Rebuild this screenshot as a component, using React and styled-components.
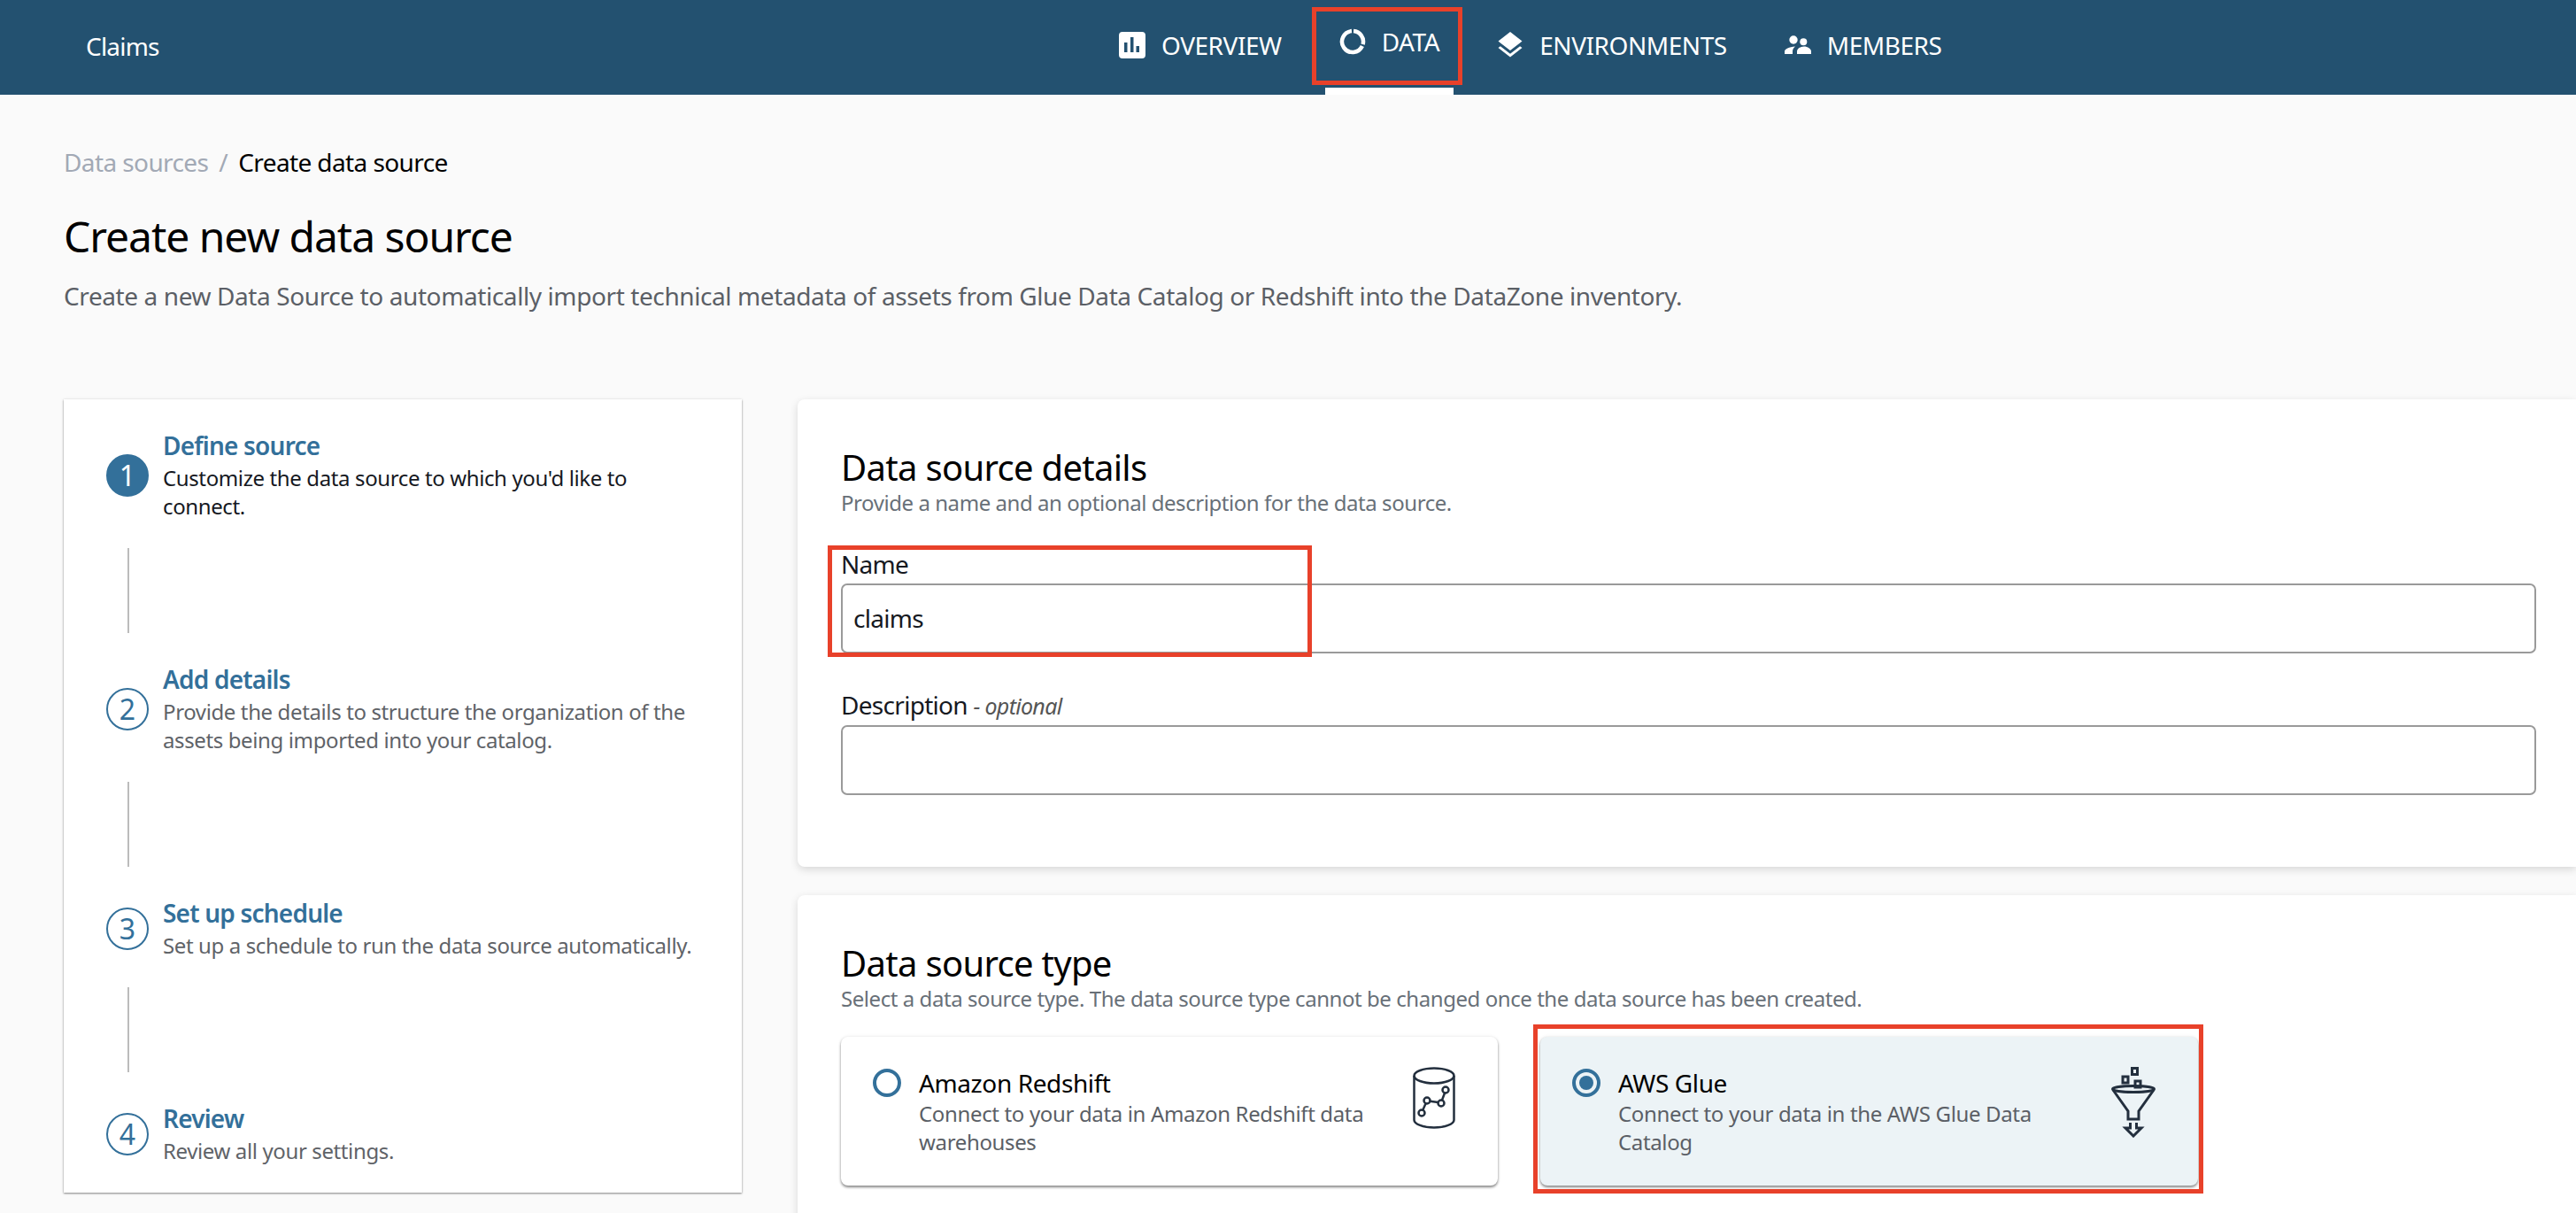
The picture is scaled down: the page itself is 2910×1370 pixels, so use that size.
import styled, { createGlobalStyle } from "styled-components";
import { MdLayers } from "react-icons/md";

const GlobalStyle = createGlobalStyle`
  html, body {
    margin: 0;
    height: 100%;
    overflow: hidden;
    background: #fafafa;
    font-family: "Noto Sans", "Open Sans", sans-serif;
    color: #16191f;
  }
  * { box-sizing: border-box; }
`;

const Page = styled.div`
  height: 1370px;
  overflow: hidden;
`;

const Header = styled.header`
  height: 107px;
  background: #235170;
  display: flex;
  color: #fff;
`;

const ProjectName = styled.div`
  width: 1248px;
  padding: 35px 0 0 97px;
  font-size: 28px;
  line-height: 34px;
  letter-spacing: -0.8px;
`;

const Nav = styled.nav`
  display: flex;
  gap: 33px;
`;

const Tab = styled.div`
  position: relative;
  height: 107px;
  padding: ${(p) => (p.$active ? "0 16px 5px" : "3px 16px 0")};
  display: flex;
  align-items: center;
  gap: 18px;
  font-size: 28px;
  letter-spacing: -0.45px;
  border-bottom: 8px solid ${(p) => (p.$active ? "#fff" : "transparent")};
`;

const TabIcon = styled.span`
  width: 30px;
  display: flex;
  justify-content: center;
  svg { flex: none; }
`;

const Marker = styled.div`
  position: absolute;
  border: 5px solid #e8412a;
  pointer-events: none;
`;

const TabMarker = styled(Marker)`
  left: -15px;
  right: -10px;
  top: 8px;
  height: 88px;
`;

const Content = styled.main`
  padding: 0 0 0 72px;
`;

const Breadcrumb = styled.div`
  padding-top: 58px;
  display: flex;
  gap: 12px;
  font-size: 28px;
  line-height: 36px;
  letter-spacing: -0.6px;
`;

const Crumb = styled.span`
  color: ${(p) => (p.$muted ? "#a2a9b5" : "#000")};
`;

const PageTitle = styled.h1`
  margin: 34px 0 0;
  font-size: 48px;
  line-height: 64px;
  font-weight: 400;
  letter-spacing: -1.05px;
  color: #000;
`;

const PageText = styled.p`
  margin: 17px 0 0;
  font-size: 28px;
  line-height: 36px;
  letter-spacing: -0.4px;
  color: #5b5f66;
`;

const Columns = styled.div`
  margin-top: 99px;
  display: grid;
  grid-template-columns: 766px 1fr;
  gap: 63px;
  align-items: start;
`;

const StepCard = styled.aside`
  background: #fff;
  height: 896px;
  padding: 34px 0 0 48px;
  box-shadow: 0 1px 2px rgba(0, 0, 0, 0.45), 0 0 4px rgba(0, 0, 0, 0.08);
`;

const Step = styled.div`
  display: flex;
  align-items: center;
  gap: 16px;
`;

const StepCircle = styled.div`
  width: 48px;
  height: 48px;
  flex: none;
  border-radius: 50%;
  border: 2px solid #33709a;
  background: ${(p) => (p.$active ? "#33709a" : "#fff")};
  color: ${(p) => (p.$active ? "#fff" : "#33709a")};
  display: flex;
  align-items: center;
  justify-content: center;
  font-size: 32px;
`;

const StepTitle = styled.div`
  font-size: 28px;
  line-height: 36px;
  font-weight: 600;
  letter-spacing: -0.8px;
  color: #33709a;
`;

const StepText = styled.div`
  margin-top: 3px;
  width: 605px;
  font-size: 24px;
  line-height: 32px;
  letter-spacing: -0.38px;
  color: ${(p) => (p.$active ? "#16191f" : "#5f6368")};
`;

const Connector = styled.div`
  width: 2px;
  height: 96px;
  margin: 31px 0 34px 24px;
  background: #bcbcbc;
`;

const Forms = styled.div`
  display: flex;
  flex-direction: column;
  gap: 32px;
`;

const Card = styled.section`
  background: #fff;
  border-radius: 8px 0 0 8px;
  padding: 52px 45px 81px 49px;
  box-shadow: 0 3px 10px rgba(0, 0, 0, 0.14);
`;

const CardTitle = styled.h2`
  margin: 0;
  font-size: 40px;
  line-height: 49px;
  font-weight: 400;
  letter-spacing: -0.7px;
  color: #000;
`;

const CardText = styled.p`
  margin: 0;
  font-size: 24px;
  line-height: 32px;
  letter-spacing: -0.44px;
  color: #687078;
`;

const Field = styled.div`
  position: relative;
  margin-top: ${(p) => p.$top};
`;

const Label = styled.div`
  font-size: 28px;
  line-height: 36px;
  letter-spacing: -0.7px;
  color: #16191f;
  margin-bottom: 4px;
`;

const Optional = styled.em`
  font-size: 25px;
  color: #555;
`;

const Input = styled.div`
  height: 79px;
  border: 2px solid #9a9a9a;
  border-radius: 7px;
  background: #fff;
  padding: 0 12px 2px;
  display: flex;
  align-items: center;
  font-size: 28px;
  letter-spacing: -0.7px;
  color: #16191f;
`;

const NameMarker = styled(Marker)`
  left: -15px;
  top: -3px;
  width: 547px;
  height: 126px;
`;

const TileGrid = styled.div`
  margin-top: 27px;
  display: grid;
  grid-template-columns: 742px 743px;
  gap: 48px;
`;

const Tile = styled.div`
  position: relative;
  height: 168px;
  border-radius: 8px;
  background: ${(p) => (p.$selected ? "#ecf3f6" : "#fff")};
  padding: 34px 48px 0 36px;
  display: flex;
  gap: 20px;
  box-shadow: 0 2px 3px rgba(0, 0, 0, 0.45), 0 0 4px rgba(0, 0, 0, 0.08);
`;

const Radio = styled.div`
  width: 32px;
  height: 32px;
  flex: none;
  margin-top: 2px;
  border-radius: 50%;
  border: 4px solid #33709a;
  padding: 4px;
  &::after {
    content: "";
    display: ${(p) => (p.$checked ? "block" : "none")};
    width: 100%;
    height: 100%;
    border-radius: 50%;
    background: #33709a;
  }
`;

const TileBody = styled.div`
  width: 520px;
`;

const TileTitle = styled.div`
  font-size: 28px;
  line-height: 36px;
  letter-spacing: -0.4px;
  color: #000;
`;

const TileText = styled.div`
  margin-top: 1px;
  font-size: 24px;
  line-height: 32px;
  letter-spacing: -0.35px;
  color: #5b5f66;
`;

const TileIcon = styled.svg`
  flex: none;
  margin-left: auto;
  fill: none;
  stroke: #232f3e;
  stroke-width: 2.5;
`;

const GlueMarker = styled(Marker)`
  left: -8px;
  right: -6px;
  top: -14px;
  bottom: -9px;
`;

const OverviewIcon = () => (
  <svg width="30" height="30" viewBox="0 0 30 30" fill="currentColor">
    <path fillRule="evenodd" d="M4 0h22a4 4 0 0 1 4 4v22a4 4 0 0 1-4 4H4a4 4 0 0 1-4-4V4a4 4 0 0 1 4-4zM6 12v11h3.500V12zM13 6v17h3.500V6zM19.500 16v7H23v-7z" />
  </svg>
);

const DataIcon = () => (
  <svg width="30" height="30" viewBox="0 0 30 30" fill="none" stroke="currentColor" strokeWidth="4.5">
    <path d="M16.050 3.050A12 12 0 0 1 26.590 18.110" />
    <path d="M25.880 20.070A12 12 0 1 1 13.950 3.050" />
  </svg>
);

const EnvironmentsIcon = () => <MdLayers size={36} />;

const MembersIcon = () => (
  <svg width="30" height="30" viewBox="0 0 30 30" fill="currentColor">
    <circle cx="10" cy="9" r="4.700" />
    <circle cx="21.300" cy="11.300" r="4" />
    <path d="M0 25v-3c0-2.500 5-5 12-5.500-2 1.500-3 3.500-3 5.500v3z" />
    <path d="M14 25v-3c0-3 4-5.500 8-5.500s8 2.500 8 5.500v3z" />
  </svg>
);

const RedshiftIcon = () => (
  <TileIcon width="48" height="70" viewBox="0 0 48 70">
    <ellipse cx="24" cy="10" rx="22.5" ry="8.5" />
    <path d="M1.5 10v50c0 4.500 10 8.500 22.500 8.500s22.500-4 22.500-8.500V10" />
    <circle cx="37" cy="26" r="3.5" />
    <circle cx="32" cy="41" r="3.5" />
    <circle cx="16" cy="38" r="3.5" />
    <circle cx="10" cy="52" r="3.5" />
    <path d="M36 29.500 33 37.500M28.700 40 19.300 38.800M14.600 41.200 11.300 48.700" />
  </TileIcon>
);

const GlueIcon = () => (
  <TileIcon width="50" height="80" viewBox="0 0 50 80">
    <rect x="23.5" y="1.5" width="6" height="7" strokeWidth="3" />
    <rect x="13" y="11" width="6" height="7" strokeWidth="3" />
    <rect x="27" y="16" width="6" height="7" strokeWidth="3" />
    <ellipse cx="25" cy="25" rx="23.5" ry="3.5" strokeWidth="3" />
    <path d="M2 26 19 50v9h12v-9L48 26" strokeWidth="3" />
    <path d="M21.500 63v6H16l9 9 9-9h-5.500v-6" strokeWidth="3" />
  </TileIcon>
);

const navTabs = [
  { label: "OVERVIEW", Icon: OverviewIcon },
  { label: "DATA", Icon: DataIcon, active: true },
  { label: "ENVIRONMENTS", Icon: EnvironmentsIcon },
  { label: "MEMBERS", Icon: MembersIcon },
];

const steps = [
  { title: "Define source", text: "Customize the data source to which you'd like to connect.", active: true },
  { title: "Add details", text: "Provide the details to structure the organization of the assets being imported into your catalog." },
  { title: "Set up schedule", text: "Set up a schedule to run the data source automatically." },
  { title: "Review", text: "Review all your settings." },
];

const App = () => {
  return (
    <Page>
      <GlobalStyle />
      <Header>
        <ProjectName>Claims</ProjectName>
        <Nav>
          {navTabs.map(({ label, Icon, active }) => (
            <Tab key={label} $active={active}>
              <TabIcon><Icon /></TabIcon>
              {label}
              {active && <TabMarker />}
            </Tab>
          ))}
        </Nav>
      </Header>
      <Content>
        <Breadcrumb>
          <Crumb $muted>Data sources</Crumb>
          <Crumb $muted>/</Crumb>
          <Crumb>Create data source</Crumb>
        </Breadcrumb>
        <PageTitle>Create new data source</PageTitle>
        <PageText>
          Create a new Data Source to automatically import technical metadata of assets from Glue Data Catalog or Redshift into the DataZone inventory.
        </PageText>
        <Columns>
          <StepCard>
            {steps.map((step, i) => (
              <div key={step.title}>
                <Step>
                  <StepCircle $active={step.active}>{i + 1}</StepCircle>
                  <div>
                    <StepTitle>{step.title}</StepTitle>
                    <StepText $active={step.active}>{step.text}</StepText>
                  </div>
                </Step>
                {i < steps.length - 1 && <Connector />}
              </div>
            ))}
          </StepCard>
          <Forms>
            <Card>
              <CardTitle>Data source details</CardTitle>
              <CardText>Provide a name and an optional description for the data source.</CardText>
              <Field $top="35px">
                <Label>Name</Label>
                <Input>claims</Input>
                <NameMarker />
              </Field>
              <Field $top="40px">
                <Label>Description <Optional>- optional</Optional></Label>
                <Input />
              </Field>
            </Card>
            <Card>
              <CardTitle>Data source type</CardTitle>
              <CardText>Select a data source type. The data source type cannot be changed once the data source has been created.</CardText>
              <TileGrid>
                <Tile>
                  <Radio />
                  <TileBody>
                    <TileTitle>Amazon Redshift</TileTitle>
                    <TileText>Connect to your data in Amazon Redshift data warehouses</TileText>
                  </TileBody>
                  <RedshiftIcon />
                </Tile>
                <Tile $selected>
                  <Radio $checked />
                  <TileBody>
                    <TileTitle>AWS Glue</TileTitle>
                    <TileText>Connect to your data in the AWS Glue Data Catalog</TileText>
                  </TileBody>
                  <GlueIcon />
                  <GlueMarker />
                </Tile>
              </TileGrid>
            </Card>
          </Forms>
        </Columns>
      </Content>
    </Page>
  );
};

export default App;
